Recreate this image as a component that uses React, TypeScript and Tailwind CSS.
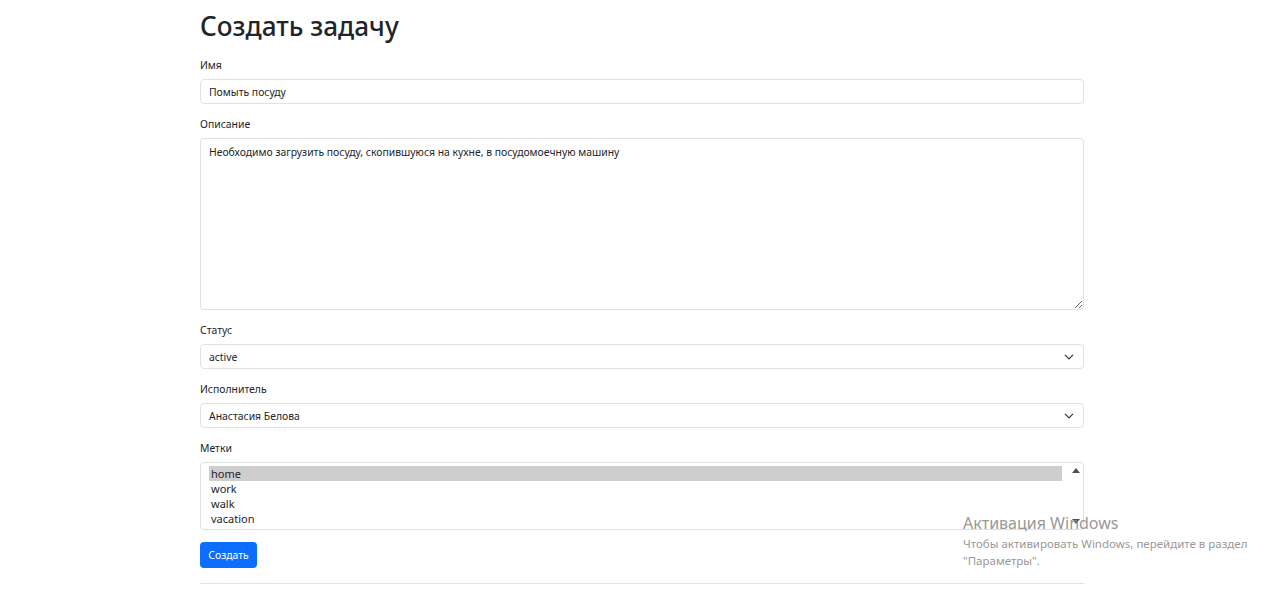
import React from "react";

const font = { fontFamily: '"Noto Sans", "Open Sans", sans-serif' };

function Chevron() {
  return (
    <svg width="10" height="10" viewBox="0 0 16 16" className="absolute right-[9px] top-[7px]">
      <path fill="none" stroke="#343a40" strokeLinecap="round" strokeLinejoin="round" strokeWidth="2" d="m2 5 6 6 6-6" />
    </svg>
  );
}

function Label({ children }: { children: React.ReactNode }) {
  return <div className="h-[16px] mb-[6px] text-[10.4px] leading-[16px] text-[#212529]">{children}</div>;
}

export default function App() {
  return (
    <div className="relative w-[1280px] h-[598px] bg-white overflow-hidden" style={font}>
      <div className="w-[884px] ml-[200px] pt-[10px] text-[#212529]">
        <h1 className="text-[26.2px] leading-[32px] font-medium mb-[15px]">Создать задачу</h1>

        <Label>Имя</Label>
        <div className="h-[25px] border border-[#dee2e6] rounded-[4px] px-[8px] text-[10.4px] leading-[24px] mb-[12px]">Помыть посуду</div>

        <Label>Описание</Label>
        <textarea
          readOnly
          defaultValue="Необходимо загрузить посуду, скопившуюся на кухне, в посудомоечную машину"
          className="block w-full h-[172px] border border-[#dee2e6] rounded-[4px] px-[8px] py-[5px] text-[10.4px] leading-[16px] mb-[12px] outline-none resize-y text-[#212529]"
          style={font}
        />

        <Label>Статус</Label>
        <div className="relative h-[25px] border border-[#dee2e6] rounded-[4px] px-[8px] text-[10.4px] leading-[24px] mb-[12px]">
          active
          <Chevron />
        </div>

        <Label>Исполнитель</Label>
        <div className="relative h-[25px] border border-[#dee2e6] rounded-[4px] px-[8px] text-[10.4px] leading-[24px] mb-[12px]">
          Анастасия Белова
          <Chevron />
        </div>

        <Label>Метки</Label>
        <div className="relative h-[68px] border border-[#dee2e6] rounded-[4px] pl-[8px] pr-[21px] pt-[3px] text-[11px] leading-[15px] mb-[11px]">
          <div className="bg-[#cecece] pl-[2px]">home</div>
          <div className="pl-[2px]">work</div>
          <div className="pl-[2px]">walk</div>
          <div className="pl-[2px]">vacation</div>
          <div className="absolute right-[1px] top-[1px] bottom-[1px] w-[13px] bg-white flex flex-col items-center justify-between py-[4px]">
            <div className="w-0 h-0 border-l-[4px] border-r-[4px] border-b-[5px] border-l-transparent border-r-transparent border-b-[#505050]" />
            <div className="w-0 h-0 border-l-[4px] border-r-[4px] border-t-[5px] border-l-transparent border-r-transparent border-t-[#505050]" />
          </div>
        </div>

        <button className="h-[26px] w-[57px] bg-[#0d6efd] text-white rounded-[4px] text-[10.4px] leading-[26px]">Создать</button>

        <div className="mt-[15px] border-t border-[#e3e3e3]" />
      </div>

      <div className="absolute left-[963px] top-[512px] text-[#8e8e8e] opacity-90">
        <div className="text-[16px] leading-[22px]">Активация Windows</div>
        <div className="text-[11.5px] leading-[17px] w-[300px] mt-[1px]">
          Чтобы активировать Windows, перейдите в раздел
          <br />
          "Параметры".
        </div>
      </div>
    </div>
  );
}
